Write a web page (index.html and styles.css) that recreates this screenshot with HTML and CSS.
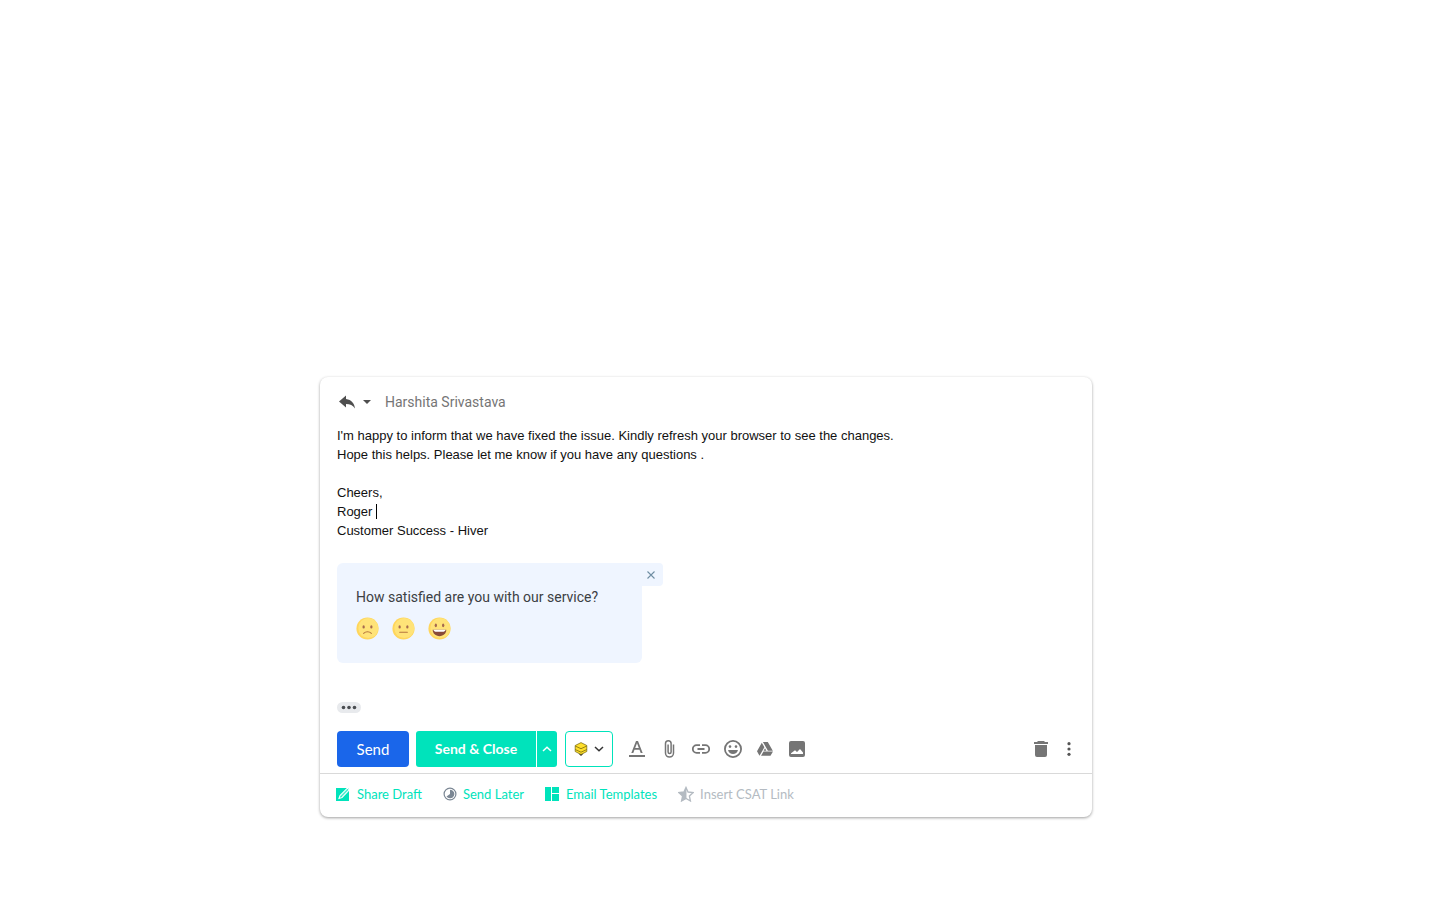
FILE: index.html
```html
<!DOCTYPE html>
<html lang="en">
<head>
<meta charset="utf-8">
<meta name="viewport" content="width=device-width, initial-scale=1">
<title>Reply</title>
<link rel="stylesheet" href="styles.css">
</head>
<body>
<main class="page">
  <section class="composer" aria-label="Reply">
    <div class="compose">
      <header class="recipient">
        <button class="reply-type" type="button" aria-label="Type of response">
          <svg width="16" height="14" viewBox="0 0 16 14" fill="#4f4f4f"><path d="M7 4V.5L0 6.500l7 6V9c4 0 7 1.200 9 4.500C15.500 8.500 12.500 4.700 7 4z"/></svg>
          <svg width="8" height="4" viewBox="0 0 8 4" fill="#4f4f4f"><path d="M0 0h8L4 4z"/></svg>
        </button>
        <span class="name">Harshita Srivastava</span>
      </header>

      <div class="message" role="textbox" aria-multiline="true" aria-label="Message body" contenteditable="true"><p>I'm happy to inform that we have fixed the issue. Kindly refresh your browser to see the changes.</p><p>Hope this helps. Please let me know if you have any questions .</p><p><br></p><p>Cheers,</p><p>Roger <span class="caret"></span></p><p>Customer Success - Hiver</p></div>

      <div class="survey-row">
        <section class="survey">
          <h2 class="question">How satisfied are you with our service?</h2>
          <div class="ratings">
            <button class="face" type="button" aria-label="Unsatisfied">
              <svg width="23" height="23" viewBox="0 0 22 22"><circle cx="11" cy="11" r="10.600" fill="#ffd65c"/><circle cx="11.800" cy="10.600" r="9.600" fill="#ffe378"/><ellipse cx="7.300" cy="9.500" rx="1.100" ry="1.500" fill="#a66a4e"/><ellipse cx="14.700" cy="9.500" rx="1.100" ry="1.500" fill="#a66a4e"/><path d="M7.300 15.700c2-2 5.400-2 7.400 0" fill="none" stroke="#b5763f" stroke-width="1" stroke-linecap="round"/></svg>
            </button>
            <button class="face" type="button" aria-label="Neutral">
              <svg width="23" height="23" viewBox="0 0 22 22"><circle cx="11" cy="11" r="10.600" fill="#ffd65c"/><circle cx="11.800" cy="10.600" r="9.600" fill="#ffe378"/><ellipse cx="7.300" cy="9.500" rx="1.100" ry="1.500" fill="#a66a4e"/><ellipse cx="14.700" cy="9.500" rx="1.100" ry="1.500" fill="#a66a4e"/><path d="M7.300 14.500h7.400" fill="none" stroke="#b5763f" stroke-width="1" stroke-linecap="round"/></svg>
            </button>
            <button class="face" type="button" aria-label="Satisfied">
              <svg width="23" height="23" viewBox="0 0 22 22"><circle cx="11" cy="11" r="10.600" fill="#ffd65c"/><circle cx="11.800" cy="10.600" r="9.600" fill="#ffe378"/><ellipse cx="7.500" cy="8" rx="1.100" ry="1.800" fill="#a66a4e"/><ellipse cx="14.500" cy="8" rx="1.100" ry="1.800" fill="#a66a4e"/><path d="M4.500 12.300h13c0 3.700-2.800 6-6.500 6s-6.500-2.300-6.500-6z" fill="#8a4b38"/><path d="M5.200 12.300h11.600c-.2 1.100-1 1.700-2 1.700H7.200c-1 0-1.800-.6-2-1.700z" fill="#fff"/></svg>
            </button>
          </div>
        </section>
        <button class="survey-close" type="button" aria-label="Remove survey">
          <svg width="8" height="8" viewBox="0 0 8 8" fill="none" stroke="#6f8ea3" stroke-width="1.100"><path d="M.5.5l7 7M7.500.5l-7 7"/></svg>
        </button>
      </div>

      <button class="trimmed" type="button" aria-label="Show trimmed content">
        <svg width="16" height="5" viewBox="0 0 16 5" fill="#4a4d51"><circle cx="2.500" cy="2.500" r="1.800"/><circle cx="8" cy="2.500" r="1.800"/><circle cx="13.500" cy="2.500" r="1.800"/></svg>
      </button>

      <div class="toolbar">
        <button class="btn send" type="button">Send</button>
        <div class="split">
          <button class="btn send-close" type="button">Send &amp; Close</button>
          <button class="btn send-more" type="button" aria-label="More send options">
            <svg width="10" height="6" viewBox="0 0 10 6" fill="none" stroke="#fff" stroke-width="1.500"><path d="M1 5l4-3.800L9 5"/></svg>
          </button>
        </div>
        <button class="hiver" type="button" aria-label="Hiver options">
          <svg width="14" height="14" viewBox="0 0 14 14"><path d="M4.500 11.500L7 14l2.500-2.500z" fill="#222"/><path d="M7 .6l5.800 2.900v6L7 12.500 1.200 9.500v-6z" fill="#ffdf2b" stroke="#6d600f" stroke-width=".7" stroke-linejoin="round"/><path d="M1.200 4L7 6.700 12.800 4M1.200 7.500L7 10.200l5.800-2.700" fill="none" stroke="#7a6a0c" stroke-width=".8"/></svg>
          <svg width="10" height="6" viewBox="0 0 10 6" fill="none" stroke="#333" stroke-width="1.500"><path d="M1 1l4 3.800L9 1"/></svg>
        </button>
        <div class="tools">
          <button class="tool" type="button" aria-label="Formatting options"><svg width="18" height="18" viewBox="0 0 18 18"><path d="M1 15h16v2H1zM8 1h2l4.700 12h-2l-1.200-3.200h-5L5.300 13h-2zM7.200 8h3.600L9 3.200z"/></svg></button>
          <button class="tool" type="button" aria-label="Attach files"><svg width="18" height="18" viewBox="0 0 18 18" fill="none" stroke="currentColor" stroke-width="1.500"><path d="M13.500 4.500v8.600a4 4 0 0 1-8 0V3.600a2.800 2.800 0 0 1 5.600 0v8.500a1.500 1.500 0 0 1-3 0V4.500"/></svg></button>
          <button class="tool" type="button" aria-label="Insert link"><svg width="18" height="18" viewBox="0 0 18 18"><path d="M1.700 9A2.900 2.900 0 0 1 4.600 6.100H8V4.300H4.600a4.700 4.700 0 0 0 0 9.400H8v-1.800H4.600A2.900 2.900 0 0 1 1.700 9zM5.500 8h7v2h-7zM13.400 4.300H10v1.800h3.400a2.900 2.900 0 0 1 0 5.800H10v1.800h3.400a4.700 4.700 0 0 0 0-9.400z"/></svg></button>
          <button class="tool" type="button" aria-label="Insert emoji"><svg width="18" height="18" viewBox="0 0 18 18"><circle cx="9" cy="9" r="8.100" fill="none" stroke="currentColor" stroke-width="1.800"/><circle cx="6" cy="6.600" r="1.300"/><circle cx="12" cy="6.600" r="1.300"/><path d="M4 10h10c-.7 2.500-2.500 4-5 4s-4.300-1.500-5-4z"/></svg></button>
          <button class="tool" type="button" aria-label="Insert from Drive"><svg width="18" height="18" viewBox="0 0 18 18"><path d="M5.800 2.700L1 11.300l2.500 4.500 4.900-8.600zM6.900 2h4.900l5 8.700h-4.900zM7.500 11.500H17l-2.500 4.300H5zM9 8.200l1.400 2.500H7.600z"/></svg></button>
          <button class="tool" type="button" aria-label="Insert photo"><svg width="18" height="18" viewBox="0 0 18 18"><path fill-rule="evenodd" d="M3 1h12a2 2 0 0 1 2 2v12a2 2 0 0 1-2 2H3a2 2 0 0 1-2-2V3a2 2 0 0 1 2-2zM3 14h12v-1.500l-3-3.500-3 3-2-1.800-4 3z"/></svg></button>
        </div>
        <div class="end-tools">
          <button class="end-tool" type="button" aria-label="Discard draft"><svg width="14" height="16" viewBox="0 0 14 16"><path d="M4 0h6l1 1h3v2H0V1h3zM1 4h12v10a2 2 0 0 1-2 2H3a2 2 0 0 1-2-2z"/></svg></button>
          <button class="end-tool dark" type="button" aria-label="More options"><svg width="4" height="14" viewBox="0 0 4 14"><circle cx="2" cy="1.700" r="1.600"/><circle cx="2" cy="7" r="1.600"/><circle cx="2" cy="12.300" r="1.600"/></svg></button>
        </div>
      </div>
    </div>

    <footer class="actions">
      <button class="action" type="button">
        <svg width="15" height="15" viewBox="0 0 15 15"><path d="M0 1h13v13H0z" fill="#00e3bb"/><path d="M3 11.500l1-3L11.500 1l1.800 1.800L6 10.500z" fill="#00e3bb" stroke="#fff" stroke-width="1.100"/><path d="M5 9.500l7-7" stroke="#fff" stroke-width=".6"/></svg>
        Share Draft
      </button>
      <button class="action" type="button">
        <svg width="14" height="14" viewBox="0 0 14 14"><circle cx="7" cy="7" r="5.900" fill="none" stroke="#7b8794" stroke-width="1.200"/><path d="M7 2.700a4.300 4.300 0 1 1-3.500 6.800L7 7z" fill="#7b8794"/></svg>
        Send Later
      </button>
      <button class="action" type="button">
        <svg width="15" height="14" viewBox="0 0 15 14" fill="#00e3bb"><path d="M0 0h6v14H0zM7 0h7v6H7zM7 7h7v7H7z"/></svg>
        Email Templates
      </button>
      <button class="action muted" type="button">
        <svg width="16" height="16" viewBox="0 0 17 16"><path d="M8.500 1l2.200 4.900 5.400.6-4 3.600 1.100 5.300-4.700-2.700-4.700 2.700 1.100-5.300-4-3.600 5.400-.6z" fill="none" stroke="#b4bbc2" stroke-width="1.400"/><path d="M9 .5v12.200l-5.200 3 1-5.400L.7 6.500l5.600-.6z" fill="#b4bbc2"/></svg>
        Insert CSAT Link
      </button>
    </footer>
  </section>
</main>
</body>
</html>
```
FILE: styles.css
```css
* {
  box-sizing: border-box;
}

body {
  margin: 0;
  background: #fff;
  font-family: "Liberation Sans", Arial, sans-serif;
}

button {
  display: flex;
  align-items: center;
  justify-content: center;
  margin: 0;
  padding: 0;
  border: 0;
  background: none;
  color: inherit;
  font: inherit;
  cursor: pointer;
}

svg {
  display: block;
  flex: none;
}

.page {
  padding: 377px 348px 24px 320px;
}

.composer {
  border-radius: 8px;
  background: #fff;
  box-shadow: 0 1px 3px rgba(0, 0, 0, 0.38);
}

.compose {
  padding: 13px 9px 6px 17px;
  border-bottom: 1px solid #d9d9d9;
}

.recipient {
  display: flex;
  align-items: center;
  gap: 14px;
  height: 24px;
  padding-left: 2px;
}

.reply-type {
  gap: 8px;
}

.name {
  color: #757575;
  font: 14px/24px Roboto, sans-serif;
}

.message {
  margin-top: 12px;
  color: #111;
  font-size: 13px;
  line-height: 19px;
  outline: none;
}

.message p {
  margin: 0;
}

.caret {
  display: inline-block;
  width: 1px;
  height: 15px;
  background: #000;
  vertical-align: -3px;
}

.survey-row {
  display: flex;
  align-items: flex-start;
  margin-top: 23px;
}

.survey {
  width: 305px;
  height: 100px;
  padding: 24px 19px;
  border-radius: 6px 0 6px 6px;
  background: #eff5ff;
}

.question {
  margin: 0;
  color: #3c4043;
  font: 14px/20px Roboto, sans-serif;
  white-space: nowrap;
}

.ratings {
  display: flex;
  gap: 13px;
  margin-top: 10px;
}

.survey-close {
  width: 21px;
  height: 23px;
  padding-right: 4px;
  border-radius: 0 4px 4px 0;
  background: #eff5ff;
}

.trimmed {
  width: 24px;
  height: 11px;
  margin-top: 39px;
  border-radius: 6px;
  background: #e8eaed;
}

.toolbar {
  display: flex;
  align-items: center;
  margin-top: 18px;
}

.btn {
  height: 36px;
  color: #fff;
  font: 14px/20px Lato, sans-serif;
}

.send {
  width: 72px;
  margin-right: 7px;
  border-radius: 4px;
  background: #1a66ea;
  font-size: 15px;
}

.split {
  display: flex;
  gap: 1px;
  margin-right: 8px;
}

.send-close {
  width: 120px;
  border-radius: 3px 0 0 3px;
  background: #00e3bb;
  font-weight: 700;
}

.send-more {
  width: 20px;
  border-radius: 0 3px 3px 0;
  background: #00e3bb;
}

.hiver {
  gap: 6px;
  width: 48px;
  height: 36px;
  border: 1px solid #00e3bb;
  border-radius: 4px;
}

.tools,
.end-tools {
  display: flex;
  color: #757575;
}

.tools {
  margin-left: 8px;
}

.end-tools {
  margin-left: auto;
}

.tool {
  width: 32px;
  height: 32px;
}

.end-tool {
  width: 28px;
  height: 32px;
}

.dark {
  color: #555;
}

.tools svg:not([fill]),
.end-tools svg {
  fill: currentColor;
}

.actions {
  display: flex;
  gap: 21px;
  padding: 10px 16px 13px;
}

.action {
  gap: 6px;
  color: #00e3bb;
  font: 13px/20px Lato, sans-serif;
  white-space: nowrap;
}

.muted {
  color: #b4bbc2;
}
```
